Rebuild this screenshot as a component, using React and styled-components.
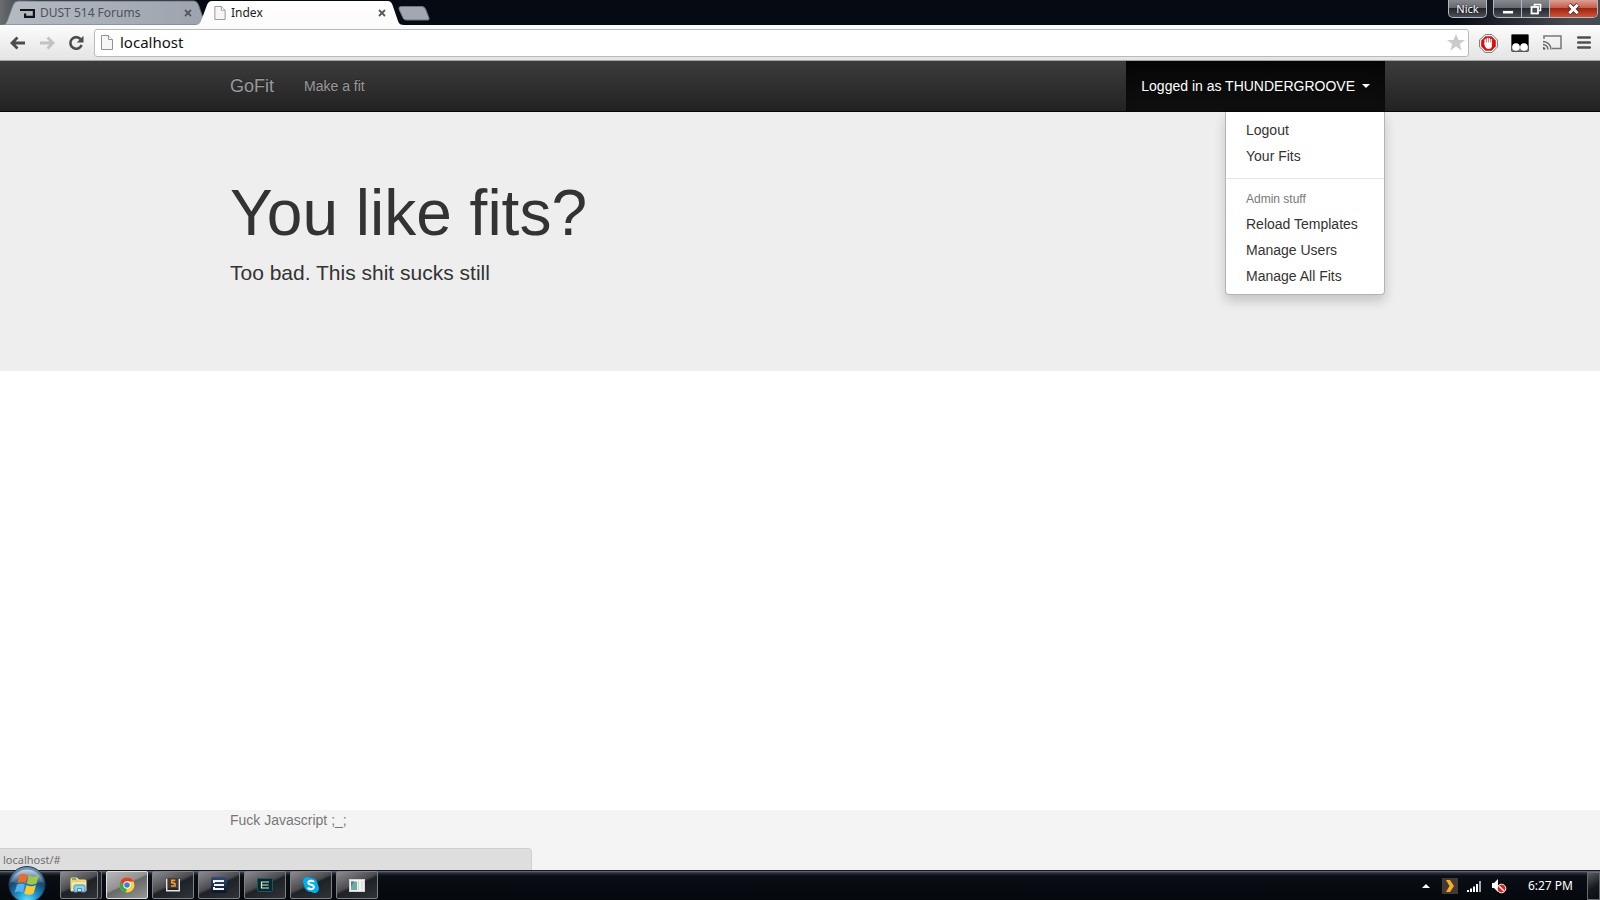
import React from "react";
import styled, { createGlobalStyle, css } from "styled-components";

const uiFont = `"Noto Sans", "Open Sans", sans-serif`;
const pageFont = `"Liberation Sans", Arial, sans-serif`;

const GlobalStyle = createGlobalStyle`
  *, *::before, *::after { box-sizing: border-box; }
  body { margin: 0; background: #fff; font-family: ${pageFont}; font-size: 14px; line-height: 20px; color: #333; }
  a { color: inherit; text-decoration: none; }
  button { font: inherit; color: inherit; margin: 0; padding: 0; border: 0; background: none; cursor: pointer; }
  svg { display: block; flex: none; }
  ul { list-style: none; margin: 0; padding: 0; }
`;

const Screen = styled.div`
  display: flex;
  flex-direction: column;
  min-height: 100vh;
`;

/* Browser window */

const TitleBar = styled.header`
  display: flex;
  justify-content: space-between;
  align-items: flex-start;
  height: 25px;
  overflow: hidden;
  font-family: ${uiFont};
  background:
    linear-gradient(90deg, #6a6d70 0, #54575b 12px, transparent 40px),
    linear-gradient(90deg, transparent 91%, rgba(90, 96, 104, 0.75) 98%),
    #060a12;
`;

const TabStrip = styled.nav`
  display: flex;
  align-items: flex-start;
`;

const Tab = styled.div`
  position: relative;
  z-index: ${(p) => (p.$active ? 2 : 1)};
  display: flex;
  align-items: center;
  gap: 5px;
  width: 212px;
  height: 25px;
  padding: 1px 18px 0 20px;
  margin-right: -18px;
  font-size: 12px;
  line-height: 16px;
  color: ${(p) => (p.$active ? "#1c1c1c" : "#4d5158")};
`;

const TabShape = styled.svg`
  position: absolute;
  inset: 0;
  z-index: -1;
`;

const TabTitle = styled.a`
  flex: 1;
  white-space: nowrap;
`;

const TabClose = styled.button`
  width: 12px;
  height: 12px;
  display: grid;
  place-items: center;
`;

const NewTab = styled.button`
  margin: 6px 0 0 10px;
`;

const WindowControls = styled.div`
  display: flex;
  gap: 6px;
  padding-right: 2px;
`;

const glass = css`
  border: 1px solid #b4b7bc;
  border-top: 0;
  background: linear-gradient(#85888d 0, #686b70 45%, #24272d 50%, #4b4f56 100%);
`;

const ProfileButton = styled.button`
  ${glass}
  width: 39px;
  height: 18px;
  border-radius: 0 0 5px 5px;
  color: #fff;
  font-size: 11px;
  line-height: 16px;
  text-shadow: 0 0 2px #000;
`;

const ControlGroup = styled.div`
  ${glass}
  display: flex;
  height: 18px;
  border-radius: 0 0 5px 5px;
  overflow: hidden;
`;

const Control = styled.button`
  width: ${(p) => (p.$close ? 47 : 28)}px;
  display: grid;
  place-items: center;
  border-right: ${(p) => (p.$close ? 0 : "1px solid #b4b7bc")};
  ${(p) =>
    p.$close &&
    css`
      background: linear-gradient(#dca093 0, #c4604c 45%, #a02410 50%, #cf5434 100%);
    `}
`;

const Toolbar = styled.div`
  display: flex;
  align-items: center;
  height: 36px;
  padding: 0 7px 0 9px;
  gap: 10px;
  background: linear-gradient(#fcfcfc, #e4e4e4);
  border-bottom: 1px solid #a4a6a6;
`;

const NavButtons = styled.div`
  display: flex;
  gap: 11px;
`;

const IconButton = styled.button`
  width: 18px;
  height: 18px;
  display: grid;
  place-items: center;
`;

const AddressBar = styled.form`
  flex: 1;
  display: flex;
  align-items: center;
  gap: 7px;
  height: 28px;
  margin: 0 0 0 -1px;
  padding: 0 3px 0 6px;
  background: #fff;
  border: 1px solid #bababa;
  border-radius: 3px;
`;

const AddressInput = styled.input`
  flex: 1;
  min-width: 0;
  height: 24px;
  padding: 0 0 2px;
  border: 0;
  outline: 0;
  background: transparent;
  font-family: ${uiFont};
  font-size: 15px;
  color: #111;
`;

const Extensions = styled.div`
  display: flex;
  gap: 14px;
`;

/* GoFit page */

const Viewport = styled.div`
  position: relative;
  flex: 1;
  display: flex;
  flex-direction: column;
`;

const Container = styled.div`
  width: 100%;
  max-width: 1170px;
  margin: 0 auto;
  padding: 0 15px;
`;

const Navbar = styled.nav`
  height: 51px;
  background: linear-gradient(#3c3c3c, #222);
  border-bottom: 1px solid #080808;
`;

const NavRow = styled(Container)`
  display: flex;
  padding: 0;
`;

const Brand = styled.a`
  padding: 15px;
  font-size: 18px;
  color: #999;
  text-shadow: 0 -1px 0 rgba(0, 0, 0, 0.25);
`;

const NavLink = styled.a`
  padding: 15px;
  color: #999;
  text-shadow: 0 -1px 0 rgba(0, 0, 0, 0.25);
`;

const Dropdown = styled.div`
  position: relative;
  margin-left: auto;
`;

const DropdownToggle = styled.button`
  display: flex;
  align-items: center;
  gap: 7px;
  height: 50px;
  padding: 0 15px;
  color: #fff;
  background: linear-gradient(#060606, #0f0f0f);
  box-shadow: inset 0 3px 9px rgba(0, 0, 0, 0.25);
  white-space: nowrap;
`;

const Caret = styled.span`
  border-top: 4px solid #fff;
  border-left: 4px solid transparent;
  border-right: 4px solid transparent;
`;

const Menu = styled.ul`
  position: absolute;
  top: 51px;
  right: 0;
  z-index: 3;
  min-width: 160px;
  padding: 5px 0;
  background: #fff;
  border: 1px solid #b4b4b4;
  border-top: 0;
  border-radius: 0 0 4px 4px;
  box-shadow: 0 6px 12px rgba(0, 0, 0, 0.175);
`;

const MenuLink = styled.a`
  display: block;
  padding: 3px 20px;
  white-space: nowrap;
`;

const MenuDivider = styled.li`
  height: 1px;
  margin: 9px 0;
  background: #e5e5e5;
`;

const MenuHeader = styled.li`
  padding: 3px 20px;
  font-size: 12px;
  line-height: 17px;
  color: #777;
`;

const Jumbotron = styled.section`
  padding: 67px 0 68px;
  background: #eee;
`;

const Title = styled.h1`
  margin: 0 0 10px;
  font-size: 64px;
  line-height: 69px;
  font-weight: 400;
`;

const Lead = styled.p`
  margin: 0 0 15px;
  font-size: 21px;
  line-height: 30px;
`;

const Footer = styled.footer`
  height: 60px;
  margin-top: auto;
  background: #f4f4f4;
  color: #777;
`;

const StatusBubble = styled.div`
  position: absolute;
  left: 0;
  bottom: 0;
  width: 532px;
  max-width: 100%;
  height: 22px;
  padding: 0 3px;
  font-family: ${uiFont};
  font-size: 11px;
  line-height: 22px;
  color: #6e6e6e;
  background: #dedede;
  border: 1px solid #d0d0d0;
  border-width: 1px 1px 0 0;
  border-radius: 0 4px 0 0;
`;

/* Desktop taskbar */

const Taskbar = styled.footer`
  position: relative;
  display: flex;
  justify-content: space-between;
  height: 30px;
  border-top: 1px solid #14181e;
  background: linear-gradient(#6c7580 0, #262d37 2px, #0a0e15 5px, #05080d 100%);
  color: #fff;
  font-family: ${uiFont};
`;

const TaskList = styled.div`
  display: flex;
  gap: 4px;
  padding-left: 8px;
`;

const StartButton = styled.button`
  width: 38px;
  height: 34px;
  margin: -5px 10px 0 0;
`;

const TaskButton = styled.button`
  width: ${(p) => (p.$stacked ? 38 : 42)}px;
  height: 28px;
  margin-right: ${(p) => (p.$stacked ? 4 : 0)}px;
  display: grid;
  place-items: center;
  border: 1px solid ${(p) => (p.$active ? "#e0e0e0" : "#7d8086")};
  border-radius: 2px;
  background: ${(p) =>
    p.$active
      ? "linear-gradient(155deg, #b9b9b9 0, #929292 45%, #686868 50%, #979797 100%)"
      : "linear-gradient(155deg, #8d8b91 0, #4b4c50 45%, #1e2125 52%, #303338 100%)"};
  box-shadow: ${(p) => (p.$stacked ? "2px 0 0 #20242a, 4px 0 0 -1px #20242a, 4px 0 0 #6a6e74" : "none")};
`;

const Tray = styled.div`
  display: flex;
  align-items: center;
  gap: 9px;
`;

const Clock = styled.time`
  margin: 0 5px 0 12px;
  font-size: 12px;
  line-height: 16px;
  white-space: nowrap;
`;

const ShowDesktop = styled.button`
  width: 13px;
  height: 28px;
  border: 1px solid #666b72;
  background: linear-gradient(150deg, #5a5e63, #16191e 55%, #0b0e12);
`;

const CloseGlyph = () => (
  <svg width="8" height="8" viewBox="0 0 8 8">
    <path d="M1 1L7 7M7 1L1 7" stroke="#55585c" strokeWidth="1.8" />
  </svg>
);

const PageGlyph = ({ w = 12, h = 15 }) => (
  <svg width={w} height={h} viewBox="0 0 12 15">
    <path d="M.5.5H7.5L11.5 4.5V14.5H.5Z" fill="#f6f6f6" stroke="#929292" />
    <path d="M7.5.5V4.5H11.5" fill="#fff" stroke="#929292" />
  </svg>
);

const TabOutline = ({ active }) => (
  <TabShape width="212" height="25" viewBox="0 0 212 25">
    <defs>
      <linearGradient id={active ? "tabOn" : "tabOff"} x2={active ? "0" : "1"} y2={active ? "1" : "0"}>
        <stop stopColor={active ? "#ffffff" : "#b4bbc3"} />
        <stop offset="1" stopColor={active ? "#fbfbfb" : "#9ca3ae"} />
      </linearGradient>
    </defs>
    <path
      d="M0 25C4 25 6 24 7 21L13 5Q14.500 1 18 1H194Q197 1 198.500 5L204 21C205 24 207 25 210 25Z"
      fill={`url(#${active ? "tabOn" : "tabOff"})`}
      stroke={active ? "none" : "#6f767f"}
    />
  </TabShape>
);

const Arrow = ({ color, flip }) => (
  <svg width="16" height="14" viewBox="0 0 16 14">
    <path
      d={flip ? "M1 7H14M8.500 1.500L14 7L8.500 12.500" : "M15 7H2M7.500 1.500L2 7L7.500 12.500"}
      fill="none"
      stroke={color}
      strokeWidth="2.8"
    />
  </svg>
);

const StartOrb = () => (
  <svg width="38" height="34" viewBox="0 0 38 34">
    <defs>
      <radialGradient id="orb" cx=".5" cy=".95" r=".9">
        <stop stopColor="#5fe6ff" />
        <stop offset=".35" stopColor="#1b8fc8" />
        <stop offset=".7" stopColor="#17466f" />
        <stop offset="1" stopColor="#6c93b3" />
      </radialGradient>
      <linearGradient id="shine" x2="0" y2="1">
        <stop stopColor="#d5e4ee" stopOpacity=".85" />
        <stop offset="1" stopColor="#7fa5c0" stopOpacity=".25" />
      </linearGradient>
    </defs>
    <circle cx="19" cy="18.500" r="18" fill="url(#orb)" stroke="#203a50" />
    <path d="M3 16A16.500 16.500 0 0 1 35 16Q19 20 3 16Z" fill="url(#shine)" />
    <path d="M11.500 9Q15 6.500 19.500 9L17.500 17Q14 15 9.500 17Z" fill="#ee6a2a" />
    <path d="M20.800 9.500Q25.500 12 31 9L28.500 17.500Q24 20 18.800 17.500Z" fill="#9dc84b" />
    <path d="M9 18.500Q13 16.500 17 18.500L15 26.500Q11 24.500 6.800 26.500Z" fill="#5ab1ea" />
    <path d="M18.500 19Q23 21.500 28 19L25.500 27.500Q21 30 16.200 27.500Z" fill="#fcc834" />
  </svg>
);

const FolderIcon = () => (
  <svg width="18" height="16" viewBox="0 0 18 16">
    <path d="M1 2Q1 1 2 1H7L9 3H15Q16 3 16 4V14H1Z" fill="#e8cf74" stroke="#f5e6a4" />
    <path d="M2 2H6" stroke="#53a946" strokeWidth="1.500" />
    <path d="M2 5H16V13H2Z" fill="#f6e69f" />
    <path d="M4 15V9.500Q4 8 6 8H13Q15 8 15 9.500V15H11.500V11.500H7.500V15Z" fill="#8fd0f2" stroke="#3c94cc" />
  </svg>
);

const ChromeIcon = () => (
  <svg width="16" height="16" viewBox="0 0 16 16">
    <circle cx="8" cy="8" r="7.500" fill="#ffd23b" />
    <path d="M1.500 4.200A7.500 7.500 0 0 1 14.600 4.500H8L4.600 10Z" fill="#e23d2e" />
    <path d="M1.500 4.200L4.900 10L8 11.500L6.800 15.400A7.500 7.500 0 0 1 1.500 4.200Z" fill="#3ca84b" />
    <circle cx="8" cy="8" r="3.700" fill="#fff" />
    <circle cx="8" cy="8" r="2.800" fill="#3d7fd6" />
  </svg>
);

const SublimeIcon = () => (
  <svg width="14" height="14" viewBox="0 0 14 14">
    <path d="M.7 1V12.800H13.300V1" fill="#3a3633" stroke="#e4e4e4" strokeWidth="1.400" />
    <rect x="2" y="0" width="10" height="10" rx="1" fill="#403b37" />
    <path d="M9.300 2.300H5.800V4.600L8.900 5.600V8H5" fill="none" stroke="#f39a32" strokeWidth="1.700" />
    <path d="M2 11H12" stroke="#171717" />
  </svg>
);

const EveIcon = () => (
  <svg width="16" height="16" viewBox="0 0 16 16">
    <defs>
      <linearGradient id="eve" x2="0" y2="1">
        <stop stopColor="#2f4d78" />
        <stop offset="1" stopColor="#0c1522" />
      </linearGradient>
    </defs>
    <rect width="16" height="16" rx="2" fill="url(#eve)" />
    <path d="M3 4H13M3 3V6M3 8H13M3 12H13M3 10V13" fill="none" stroke="#f2f5f8" strokeWidth="2" />
  </svg>
);

const EditorIcon = () => (
  <svg width="16" height="14" viewBox="0 0 16 14">
    <rect x=".5" y=".5" width="15" height="13" rx="1" fill="#062a31" stroke="#1d565d" />
    <path d="M12 4H4.500V10H12M4.500 7H11.500" fill="none" stroke="#e5e4cf" strokeWidth="1.200" />
  </svg>
);

const SkypeIcon = () => (
  <svg width="16" height="16" viewBox="0 0 16 16">
    <circle cx="4.500" cy="4.500" r="4.500" fill="#00aff0" />
    <circle cx="11.500" cy="11.500" r="4.500" fill="#00aff0" />
    <circle cx="8" cy="8" r="6.900" fill="#00aff0" />
    <path d="M11 5Q10 3.500 7.700 3.700Q5.200 4 5.300 5.900Q5.500 7.400 8 7.700Q11 8.300 10.900 10Q10.700 12.200 8 12.200Q5.600 12.200 4.900 10.500" fill="none" stroke="#fff" strokeWidth="2" />
  </svg>
);

const AppWindowIcon = () => (
  <svg width="16" height="13" viewBox="0 0 16 13">
    <rect x=".5" y=".5" width="15" height="12" fill="#f3f3f3" stroke="#d4d4d4" />
    <rect x="2" y="2.500" width="6" height="8.500" fill="#6dae98" />
    <path d="M2 2.500H5L2 8Z" fill="#4a76b8" />
    <path d="M9.500 2V11M13 2V11" stroke="#cfd0d0" />
  </svg>
);

const tasks = [
  { name: "Windows Explorer", icon: <FolderIcon />, stacked: true },
  { name: "Google Chrome", icon: <ChromeIcon />, active: true },
  { name: "Sublime Text", icon: <SublimeIcon /> },
  { name: "EVE Launcher", icon: <EveIcon /> },
  { name: "Editor", icon: <EditorIcon /> },
  { name: "Skype", icon: <SkypeIcon /> },
  { name: "Application", icon: <AppWindowIcon /> },
];

const BrowserTitleBar = () => (
  <TitleBar>
    <TabStrip aria-label="Tabs">
      <Tab>
        <TabOutline />
        <svg width="15" height="9" viewBox="0 0 15 9">
          <path d="M0 1H13.900V7.900H5.100V4.500" fill="none" stroke="#141414" strokeWidth="2.200" />
        </svg>
        <TabTitle href="#">DUST 514 Forums</TabTitle>
        <TabClose aria-label="Close DUST 514 Forums"><CloseGlyph /></TabClose>
      </Tab>
      <Tab $active>
        <TabOutline active />
        <PageGlyph w={12} h={14} />
        <TabTitle href="#">Index</TabTitle>
        <TabClose aria-label="Close Index"><CloseGlyph /></TabClose>
      </Tab>
      <NewTab aria-label="New tab">
        <svg width="32" height="15" viewBox="0 0 32 15">
          <path d="M3 .5H24Q26.500 .5 27.500 3L31 12Q31.500 14 30 14H8Q6 14 5 12L1 3Q.5 .5 3 .5Z" fill="#a1a8b1" stroke="#6f767f" />
        </svg>
      </NewTab>
    </TabStrip>
    <WindowControls>
      <ProfileButton>Nick</ProfileButton>
      <ControlGroup>
        <Control aria-label="Minimize">
          <svg width="12" height="12" viewBox="0 0 12 12">
            <rect x=".5" y="7.500" width="11" height="3.500" fill="#fff" stroke="#3c4150" />
          </svg>
        </Control>
        <Control aria-label="Restore">
          <svg width="12" height="12" viewBox="0 0 12 12">
            <path d="M4.500 3V1.500H10.500V7.500H9" fill="none" stroke="#fff" strokeWidth="1.600" />
            <rect x="1.500" y="4" width="6.500" height="6.500" fill="#4b4f58" stroke="#fff" strokeWidth="1.800" />
          </svg>
        </Control>
        <Control $close aria-label="Close">
          <svg width="13" height="12" viewBox="0 0 13 12">
            <path d="M2 1.500L11 10.500M11 1.500L2 10.500" stroke="#4e2a30" strokeWidth="4.600" />
            <path d="M2.300 1.800L10.700 10.200M10.700 1.800L2.300 10.200" stroke="#fff" strokeWidth="3" />
          </svg>
        </Control>
      </ControlGroup>
    </WindowControls>
  </TitleBar>
);

const BrowserToolbar = () => (
  <Toolbar>
    <NavButtons>
      <IconButton aria-label="Back"><Arrow color="#4c4c4c" /></IconButton>
      <IconButton aria-label="Forward"><Arrow color="#c2c2c2" flip /></IconButton>
      <IconButton aria-label="Reload">
        <svg width="16" height="16" viewBox="0 0 16 16">
          <path d="M12.600 4.200A5.800 5.800 0 1 0 13.600 10" fill="none" stroke="#4c4c4c" strokeWidth="2.600" />
          <path d="M15.500 .8V7.500H8.800Z" fill="#4c4c4c" />
        </svg>
      </IconButton>
    </NavButtons>
    <AddressBar onSubmit={(e) => e.preventDefault()}>
      <PageGlyph w={12} h={15} />
      <AddressInput aria-label="Address" defaultValue="localhost" />
      <IconButton type="button" aria-label="Bookmark this page">
        <svg width="18" height="17" viewBox="0 0 18 17">
          <path d="M9 0L11.500 6H18L12.800 10L14.700 16.500L9 12.600L3.300 16.500L5.200 10L0 6H6.500Z" fill="#cbcbcb" />
        </svg>
      </IconButton>
    </AddressBar>
    <Extensions>
      <IconButton aria-label="AdBlock">
        <svg width="19" height="19" viewBox="0 0 19 19">
          <path d="M6 .6H13L18.400 6V13L13 18.400H6L.6 13V6Z" fill="#fff" stroke="#777" />
          <path d="M6.500 2.200H12.500L16.800 6.500V12.500L12.500 16.800H6.500L2.200 12.500V6.500Z" fill="#db0d0d" />
          <path d="M6.200 10V5.800M8.300 9V4.400M10.300 9V4.400M12.300 10V5.500" stroke="#fff" strokeWidth="1.500" strokeLinecap="round" />
          <path d="M5.500 8.500H13V12Q12.500 15 9.500 15Q6.500 15 5.500 11Z" fill="#fff" />
        </svg>
      </IconButton>
      <IconButton aria-label="Tampermonkey">
        <svg width="18" height="18" viewBox="0 0 18 18">
          <rect x=".5" y=".5" width="17" height="17" rx="1" fill="#000" stroke="#555" />
          <path d="M1 12H17V17H1Z" fill="#777" />
          <circle cx="5" cy="13" r="3.800" fill="#fff" />
          <circle cx="13" cy="13" r="3.800" fill="#fff" />
        </svg>
      </IconButton>
      <IconButton aria-label="Cast">
        <svg width="19" height="15" viewBox="0 0 19 15">
          <path d="M1 4V1H18V13.500H9" fill="none" stroke="#777" strokeWidth="1.500" />
          <path d="M0 6.500A8 8 0 0 1 8 14.500M0 9.500A5 5 0 0 1 5 14.500" fill="none" stroke="#666" strokeWidth="1.400" />
          <path d="M0 12A2.500 2.500 0 0 1 2.500 14.500H0Z" fill="#555" />
        </svg>
      </IconButton>
      <IconButton aria-label="Menu">
        <svg width="14" height="13" viewBox="0 0 14 13">
          <path d="M1.200 1.500H12.800M1.200 6.500H12.800M1.200 11.500H12.800" stroke="#505050" strokeWidth="2.600" strokeLinecap="round" />
        </svg>
      </IconButton>
    </Extensions>
  </Toolbar>
);

const GoFitPage = () => (
  <>
    <Navbar>
      <NavRow>
        <Brand href="#">GoFit</Brand>
        <NavLink href="#">Make a fit</NavLink>
        <Dropdown>
          <DropdownToggle aria-expanded="true">
            Logged in as THUNDERGROOVE
            <Caret />
          </DropdownToggle>
          <Menu>
            <li><MenuLink href="#">Logout</MenuLink></li>
            <li><MenuLink href="#">Your Fits</MenuLink></li>
            <MenuDivider role="separator" />
            <MenuHeader>Admin stuff</MenuHeader>
            <li><MenuLink href="#">Reload Templates</MenuLink></li>
            <li><MenuLink href="#">Manage Users</MenuLink></li>
            <li><MenuLink href="#">Manage All Fits</MenuLink></li>
          </Menu>
        </Dropdown>
      </NavRow>
    </Navbar>
    <Jumbotron>
      <Container>
        <Title>You like fits?</Title>
        <Lead>Too bad. This shit sucks still</Lead>
      </Container>
    </Jumbotron>
    <Footer>
      <Container>Fuck Javascript ;_;</Container>
    </Footer>
  </>
);

const DesktopTaskbar = () => (
  <Taskbar>
    <TaskList>
      <StartButton aria-label="Start"><StartOrb /></StartButton>
      {tasks.map((t) => (
        <TaskButton key={t.name} aria-label={t.name} $active={t.active} $stacked={t.stacked}>
          {t.icon}
        </TaskButton>
      ))}
    </TaskList>
    <Tray>
      <svg width="11" height="4" viewBox="0 0 11 4"><path d="M0 4L4 0L8 4Z" fill="#fff" /></svg>
      <svg width="16" height="16" viewBox="0 0 16 16">
        <rect width="16" height="16" fill="#403b36" />
        <path d="M4 2H8L12 8L8 14H4L7.500 8Z" fill="#fcae1e" />
      </svg>
      <svg width="15" height="12" viewBox="0 0 15 12">
        <path d="M1 12V10M4 12V8.500M7 12V6.500M10 12V4" stroke="#fff" strokeWidth="2" />
        <path d="M13 12V1" stroke="#a5a8ac" strokeWidth="2" />
      </svg>
      <svg width="16" height="16" viewBox="0 0 16 16">
        <path d="M1 5H3L7 1V14L3 10H1Z" fill="#fff" />
        <circle cx="10.500" cy="10.500" r="4.300" fill="#e01b1b" stroke="#fff" />
        <path d="M8 8L13 13" stroke="#fff" strokeWidth="1.500" />
      </svg>
      <Clock>6:27 PM</Clock>
      <ShowDesktop aria-label="Show desktop" />
    </Tray>
  </Taskbar>
);

export default function App() {
  return (
    <Screen>
      <GlobalStyle />
      <BrowserTitleBar />
      <BrowserToolbar />
      <Viewport>
        <GoFitPage />
        <StatusBubble>localhost/#</StatusBubble>
      </Viewport>
      <DesktopTaskbar />
    </Screen>
  );
}
